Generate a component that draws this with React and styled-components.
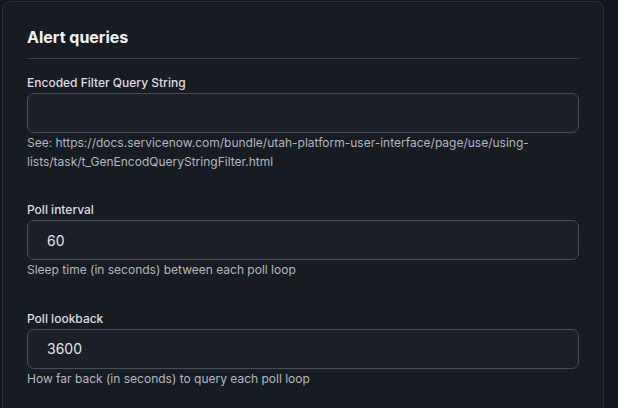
import React from "react";
import styled, { createGlobalStyle } from "styled-components";

const GlobalStyle = createGlobalStyle`
    html, body {
        margin: 0;
        padding: 0;
        background: #13161c;
        overflow: hidden;
    }
    body {
        font-family: Inter, "Noto Sans", sans-serif;
        -webkit-font-smoothing: antialiased;
    }
`;

const Page = styled.div`
    width: 618px;
    height: 408px;
    padding: 1px 14px 0 2px;
    box-sizing: border-box;
`;

const Card = styled.section`
    min-height: 460px;
    background: #171b22;
    border: 1px solid #2d3038;
    border-radius: 8px;
    padding: 25px 24px 0;
    box-sizing: border-box;
`;

const Title = styled.h2`
    margin: 0;
    font-size: 16px;
    line-height: 20px;
    font-weight: 700;
    color: #f1f3f6;
    padding-bottom: 11px;
    border-bottom: 1px solid #3b3f48;
`;

const Fields = styled.div`
    display: flex;
    flex-direction: column;
    gap: 31px;
    padding-top: 16px;
`;

const Field = styled.div`
    display: flex;
    flex-direction: column;
`;

const Label = styled.label`
    font-size: 12px;
    line-height: 15px;
    font-weight: 500;
    color: #dcdfe4;
    margin-bottom: 3px;
`;

const Input = styled.input`
    height: 40px;
    box-sizing: border-box;
    width: 100%;
    background: #1b1f27;
    border: 1px solid #4a4e58;
    border-radius: 7px;
    padding: 0 19px;
    font-family: Inter, "Noto Sans", sans-serif;
    font-size: 14px;
    color: #e3e5e9;
    outline: none;
`;

const Help = styled.p`
    margin: 0;
    font-size: 12px;
    line-height: 19.2px;
    color: #b3b8c1;
`;

const fields = [
    {
        label: "Encoded Filter Query String",
        value: "",
        help: "See: https://docs.servicenow.com/bundle/utah-platform-user-interface/page/use/using-lists/task/t_GenEncodQueryStringFilter.html",
    },
    {
        label: "Poll interval",
        value: "60",
        help: "Sleep time (in seconds) between each poll loop",
    },
    {
        label: "Poll lookback",
        value: "3600",
        help: "How far back (in seconds) to query each poll loop",
    },
];

const App = () => {
    return (
        <>
            <GlobalStyle />
            <Page>
                <Card>
                    <Title>Alert queries</Title>
                    <Fields>
                        {fields.map((f) => (
                            <Field key={f.label}>
                                <Label>{f.label}</Label>
                                <Input defaultValue={f.value} />
                                <Help>{f.help}</Help>
                            </Field>
                        ))}
                    </Fields>
                </Card>
            </Page>
        </>
    );
};

export default App;
